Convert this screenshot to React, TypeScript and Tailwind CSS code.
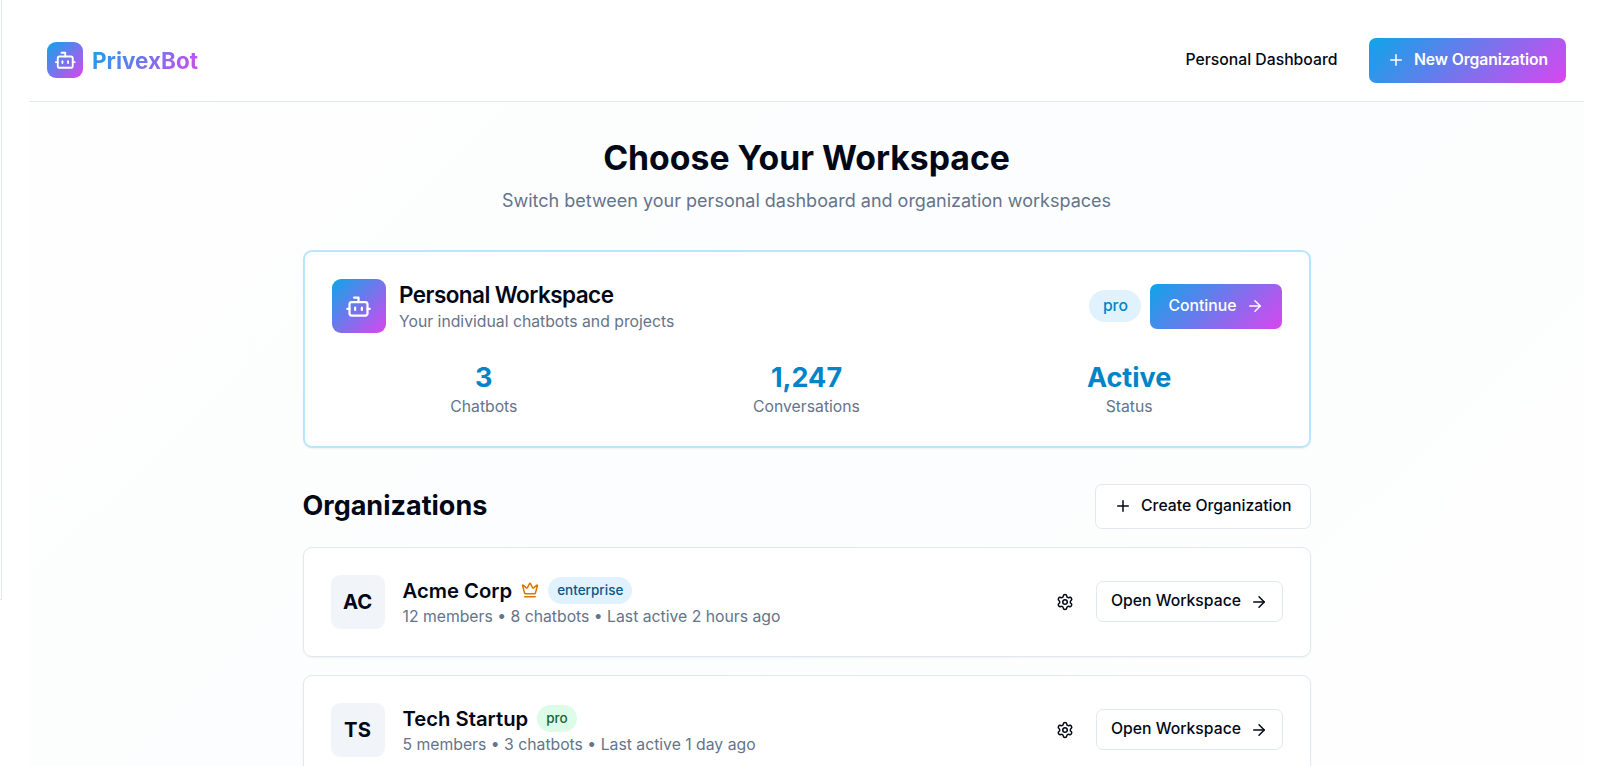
import React from "react";
import { ArrowRight, Bot, Crown, Plus, Settings } from "lucide-react";

type Org = {
  initials: string;
  name: string;
  owner?: boolean;
  plan: string;
  planClass: string;
  meta: string;
};

const orgs: Org[] = [
  {
    initials: "AC",
    name: "Acme Corp",
    owner: true,
    plan: "enterprise",
    planClass: "bg-[#e0f2fe] text-[#075985]",
    meta: "12 members • 8 chatbots • Last active 2 hours ago",
  },
  {
    initials: "TS",
    name: "Tech Startup",
    plan: "pro",
    planClass: "bg-[#dcfce7] text-[#166534]",
    meta: "5 members • 3 chatbots • Last active 1 day ago",
  },
];

const stats = [
  { value: "3", label: "Chatbots" },
  { value: "1,247", label: "Conversations" },
  { value: "Active", label: "Status" },
];

function Header() {
  return (
    <header className="flex h-[82px] shrink-0 items-center justify-between border-b border-[#e2e8f0] bg-white px-[18px]">
      <div className="flex items-center gap-[9px]">
        <div className="flex size-9 items-center justify-center rounded-[9px] bg-[linear-gradient(135deg,#0ea5e9,#d946ef)]">
          <Bot className="size-[22.5px] text-white" />
        </div>
        <span className="bg-[linear-gradient(135deg,#0ea5e9,#d946ef)] bg-clip-text pt-px text-[22.5px] leading-[31.5px] font-bold text-transparent">
          PrivexBot
        </span>
      </div>
      <div className="flex items-center gap-[13.5px]">
        <button className="h-[45px] px-[18px] text-[15.75px] leading-[22.5px] font-medium">Personal Dashboard</button>
        <button className="flex h-[45px] w-[197px] items-center justify-center gap-[9px] rounded-[7px] bg-[linear-gradient(135deg,#0ea5e9,#d946ef)] text-[15.75px] leading-[22.5px] font-semibold tracking-[-0.1px] whitespace-nowrap text-white">
          <Plus className="size-[18px]" />
          New Organization
        </button>
      </div>
    </header>
  );
}

function PersonalCard() {
  return (
    <section className="mb-[35.5px] h-[198px] rounded-[9px] border-2 border-[#bae6fd] bg-white p-[27px] shadow-xs">
      <div className="flex items-center justify-between">
        <div className="flex items-center gap-[13.5px]">
          <div className="flex size-[54px] items-center justify-center rounded-[9px] bg-[linear-gradient(135deg,#0ea5e9,#d946ef)]">
            <Bot className="size-[27px] text-white" />
          </div>
          <div>
            <h3 className="text-[22.5px] leading-[31.5px] font-semibold tracking-[-0.56px]">Personal Workspace</h3>
            <p className="text-[15.75px] leading-[22.5px] text-[#64748b]">Your individual chatbots and projects</p>
          </div>
        </div>
        <div className="flex items-center gap-[9px]">
          <span className="rounded-full bg-[#e0f2fe] px-[13.5px] py-[4.5px] text-[15.75px] leading-[22.5px] font-medium text-[#0284c7]">
            pro
          </span>
          <button className="flex h-[45px] items-center gap-[9px] rounded-[7px] bg-[linear-gradient(135deg,#0ea5e9,#d946ef)] px-[18px] text-[15.75px] leading-[22.5px] font-medium text-white">
            Continue
            <ArrowRight className="size-[18px]" />
          </button>
        </div>
      </div>
      <div className="mt-[27px] grid grid-cols-3 gap-[18px] text-center">
        {stats.map((s) => (
          <div key={s.label}>
            <div className="text-[27px] leading-9 font-bold text-[#0284c7]">{s.value}</div>
            <div className="text-[15.75px] leading-[22.5px] text-[#64748b]">{s.label}</div>
          </div>
        ))}
      </div>
    </section>
  );
}

function OrgCard({ org }: { org: Org }) {
  return (
    <article className="flex h-[110px] items-center justify-between rounded-[9px] border border-[#e2e8f0] bg-white px-[27px] shadow-xs">
      <div className="flex items-center gap-[18px]">
        <div className="flex size-[54px] items-center justify-center rounded-[9px] bg-[#f1f5f9] pt-px text-[20.25px] font-bold">
          {org.initials}
        </div>
        <div>
          <div className="flex items-center gap-[9px]">
            <h3 className="text-[20.25px] leading-[31.5px] font-semibold">{org.name}</h3>
            {org.owner && <Crown className="size-[18px] text-[#d97706]" />}
            <span className={`rounded-full px-[9px] py-[4.5px] text-[13.5px] leading-[18px] font-medium ${org.planClass}`}>
              {org.plan}
            </span>
          </div>
          <p className="text-[15.75px] leading-[22.5px] text-[#64748b]">{org.meta}</p>
        </div>
      </div>
      <div className="flex items-center gap-[9px]">
        <button className="flex h-[40.5px] items-center px-[13.5px]" aria-label="Settings">
          <Settings className="size-[18px]" />
        </button>
        <button className="flex h-[40.5px] items-center gap-[9px] rounded-[7px] border border-[#e2e8f0] bg-white px-[13.5px] text-[15.75px] leading-[22.5px] font-medium">
          Open Workspace
          <ArrowRight className="size-[18px]" />
        </button>
      </div>
    </article>
  );
}

export default function App() {
  return (
    <div className="flex h-[766px] w-[1606px] overflow-hidden bg-white font-['Inter',sans-serif] text-[#020817]">
      <div className="mr-[27px] h-[600px] w-[2px] shrink-0 border-r border-b border-[#e2e8f0]" />
      <div className="flex w-[1555px] shrink-0 flex-col pt-[19.6px]">
        <Header />
        <main className="min-h-0 flex-1 overflow-hidden bg-[linear-gradient(135deg,#fefefe,#fcfdfe_50%,#fefefe)]">
          <div className="mx-auto w-[1008px] pt-9">
            <div className="mb-9 text-center">
              <h1 className="mb-[9px] text-[33.75px] leading-[40.5px] font-bold">Choose Your Workspace</h1>
              <p className="text-[18px] leading-[27px] text-[#64748b]">
                Switch between your personal dashboard and organization workspaces
              </p>
            </div>
            <PersonalCard />
            <div className="mb-[18px] flex items-center justify-between">
              <h2 className="text-[27px] leading-9 font-bold">Organizations</h2>
              <button className="flex h-[45px] items-center gap-[9px] rounded-[7px] border border-[#e2e8f0] bg-white px-[18px] text-[15.75px] leading-[22.5px] font-medium">
                <Plus className="size-[18px]" />
                Create Organization
              </button>
            </div>
            <div className="flex flex-col gap-[18px]">
              {orgs.map((org) => (
                <OrgCard key={org.name} org={org} />
              ))}
            </div>
          </div>
        </main>
      </div>
    </div>
  );
}
